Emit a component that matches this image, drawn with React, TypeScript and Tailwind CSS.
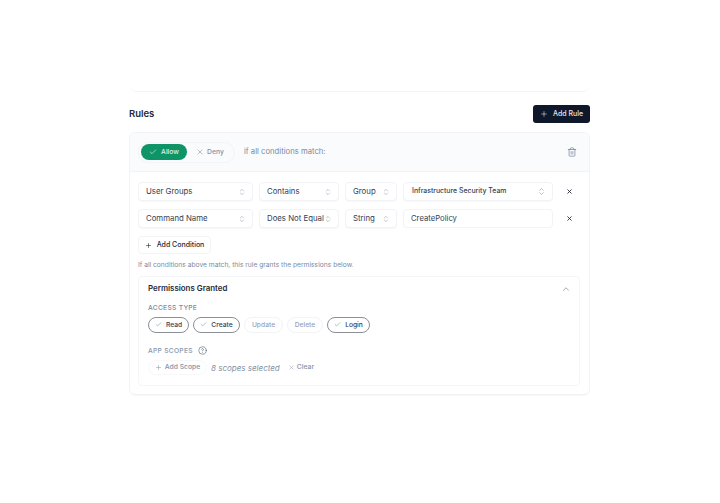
import { Check, ChevronUp, ChevronsUpDown, CircleHelp, Plus, Trash2, X } from "lucide-react";

function SelectBox({ label, width, small }: { label: string; width: string; small?: boolean }) {
  return (
    <div className={`flex h-[19px] items-center justify-between rounded-[4px] border border-[#f1f3f6] bg-white pl-[7px] pr-[6px] shadow-[0_1px_1px_rgba(15,23,42,0.03)] ${width}`}>
      <span className={small ? "whitespace-nowrap pl-[1px] text-[6.9px] font-medium text-[#334155]" : "whitespace-nowrap text-[7.8px] text-[#334155]"}>{label}</span>
      <ChevronsUpDown className={small ? "size-[9px] shrink-0 text-[#8592a6]" : "size-[8px] shrink-0 text-[#8592a6]"} strokeWidth={1.5} />
    </div>
  );
}

function ConditionRow({ children }: { children: React.ReactNode }) {
  return (
    <div className="flex items-center gap-[6px]">
      {children}
      <X className="ml-[7px] size-[7px] text-[#1e293b]" strokeWidth={3} />
    </div>
  );
}

function AccessPill({ label, on, width }: { label: string; on?: boolean; width: string }) {
  if (on) {
    return (
      <span className={`flex h-[16px] items-center justify-center gap-[4px] rounded-full border border-[#8b8f96] bg-white text-[6.7px] font-medium text-[#334155] ${width}`}>
        <Check className="size-[7px] text-[#34a77f]" strokeWidth={1.75} />
        {label}
      </span>
    );
  }
  return (
    <span className={`flex h-[16px] items-center justify-center rounded-full border border-[#f1f3f6] bg-white text-[6.7px] font-medium text-[#94a3b8] ${width}`}>
      {label}
    </span>
  );
}

export default function App() {
  return (
    <div className="h-[503px] w-[720px] overflow-hidden bg-white pl-[129px] pr-[130px] font-['Inter',sans-serif]">
      <div className="h-[92px] rounded-b-[8px] border-b border-[#f3f4f6]" />

      <div className="mt-[13px] flex h-[18px] items-center justify-between">
        <h2 className="text-[9.5px] font-semibold text-[#1e293b]">Rules</h2>
        <button className="flex h-[18px] w-[57px] items-center justify-center gap-[5px] rounded-[3px] bg-[#0f172a] text-[7px] font-medium text-[#e2e8f0]">
          <Plus className="size-[8px]" strokeWidth={1.75} />
          Add Rule
        </button>
      </div>

      <section className="mt-[9px] h-[263px] rounded-[6px] border border-[#f1f3f6] shadow-[0_1px_1px_rgba(15,23,42,0.03)]">
        <div className="flex h-[39px] items-center justify-between rounded-t-[6px] border-b border-[#f1f3f6] bg-[#fafbfd] pl-[8px] pr-[12px]">
          <div className="flex items-center">
            <div className="flex h-[21px] w-[97px] items-center gap-[9px] rounded-full border border-[#f3f4f6] px-[2px]">
              <span className="flex h-[16px] w-[46px] items-center justify-center gap-[4px] rounded-full bg-[#0f9467] text-[6.8px] font-medium text-[#d7f3e8]">
                <Check className="size-[8px]" strokeWidth={2} />
                Allow
              </span>
              <span className="flex items-center gap-[3px] text-[6.8px] font-medium text-[#8592a6]">
                <X className="size-[8px]" strokeWidth={1.75} />
                Deny
              </span>
            </div>
            <span className="ml-[9px] text-[7.7px] text-[#7c8aa0]">if all conditions match:</span>
          </div>
          <Trash2 className="size-[10px] text-[#64748b]" strokeWidth={1.5} />
        </div>

        <div className="pl-[8px] pr-[9px] pt-[10px]">
          <div className="flex flex-col gap-[8px]">
            <ConditionRow>
              <SelectBox label="User Groups" width="w-[115px]" />
              <SelectBox label="Contains" width="w-[80px]" />
              <SelectBox label="Group" width="w-[52px]" />
              <SelectBox label="Infrastructure Security Team" width="w-[150px]" small />
            </ConditionRow>
            <ConditionRow>
              <SelectBox label="Command Name" width="w-[115px]" />
              <SelectBox label="Does Not Equal" width="w-[80px]" />
              <SelectBox label="String" width="w-[52px]" />
              <div className="flex h-[19px] w-[150px] items-center rounded-[4px] border border-[#f1f3f6] bg-white pl-[7px] text-[7.7px] text-[#334155]">
                CreatePolicy
              </div>
            </ConditionRow>
          </div>

          <button className="mt-[8px] flex h-[18px] w-[73px] items-center justify-center gap-[5px] rounded-[4px] border border-[#f3f4f6] text-[7px] font-medium text-[#1e293b]">
            <Plus className="size-[7px]" strokeWidth={2} />
            Add Condition
          </button>

          <p className="mt-[6px] text-[6.7px] text-[#7c8aa0]">If all conditions above match, this rule grants the permissions below.</p>

          <div className="mt-[6px] h-[110px] rounded-[4px] border border-[#f5f6f8] pl-[9px] pr-[8px] pt-[6px]">
            <div className="flex items-center justify-between">
              <h3 className="text-[7.9px] font-semibold text-[#1e293b]">Permissions Granted</h3>
              <ChevronUp className="size-[10px] text-[#64748b]" strokeWidth={1.5} />
            </div>
            <p className="mt-[8px] text-[6.7px] font-medium tracking-[0.04em] text-[#7c8aa0]">ACCESS TYPE</p>
            <div className="mt-[4px] flex gap-[4px]">
              <AccessPill label="Read" width="w-[41px]" on />
              <AccessPill label="Create" width="w-[47px]" on />
              <AccessPill label="Update" width="w-[39px]" />
              <AccessPill label="Delete" width="w-[36px]" />
              <AccessPill label="Login" width="w-[43px]" on />
            </div>
            <div className="mt-[13px] flex items-center gap-[5px]">
              <p className="text-[6.7px] font-medium tracking-[0.04em] text-[#8a97aa]">APP SCOPES</p>
              <CircleHelp className="size-[9px] text-[#475569]" strokeWidth={1.5} />
            </div>
            <div className="mt-[4px] flex items-center">
              <span className="flex h-[15px] w-[59px] items-center justify-center gap-[3px] rounded-full border border-[#f7f8fa] text-[6.8px] font-medium text-[#8592a6]">
                <Plus className="size-[7px]" strokeWidth={1.75} />
                Add Scope
              </span>
              <span className="ml-[4px] text-[8px] italic text-[#8592a6]">8 scopes selected</span>
              <span className="ml-[8px] flex items-center gap-[2px] text-[6.8px] font-medium text-[#8592a6]">
                <X className="size-[7px]" strokeWidth={1.5} />
                Clear
              </span>
            </div>
          </div>
        </div>
      </section>
    </div>
  );
}
